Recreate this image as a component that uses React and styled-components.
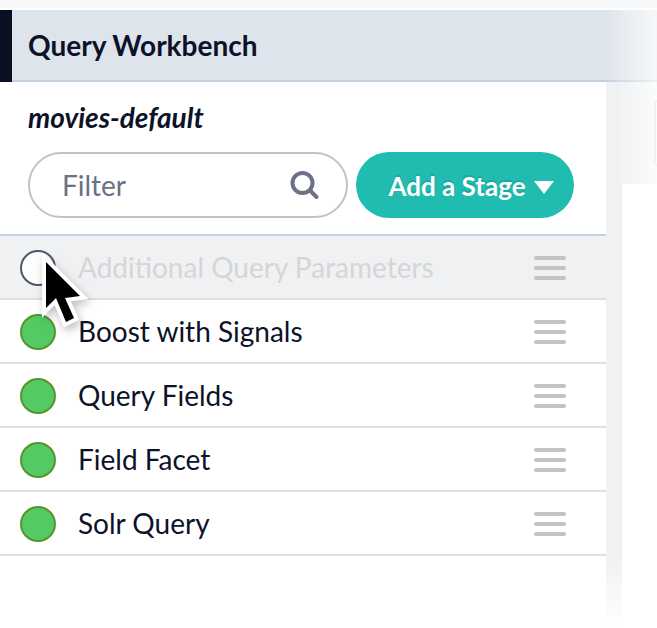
import React, { useState } from "react";
import styled, { createGlobalStyle } from "styled-components";

const GlobalStyle = createGlobalStyle`
  *, *::before, *::after { box-sizing: border-box; }
  body {
    margin: 0;
    background: #fff;
    color: #0c1228;
    font-family: Lato, "Open Sans", sans-serif;
    font-size: 28px;
    line-height: 36px;
  }
`;

const Page = styled.div`
  min-height: 100vh;
  display: flex;
  flex-direction: column;
  overflow: hidden;
`;

const TopStrip = styled.div`
  height: 10px;
  background: #f7f8fa;
  border-bottom: 2px solid #fff;
`;

const Header = styled.header`
  display: flex;
  height: 72px;
  background: linear-gradient(to left, #f6f7f8, #e9edf0 30px, #dee4ec 52px);
`;

const Accent = styled.div`
  width: 12px;
  background: #0a0f24;
`;

const Title = styled.h1`
  flex: 1;
  margin: 0;
  padding: 17px 16px;
  border-bottom: 2px solid;
  border-image: linear-gradient(to left, #eff2f5, #c5d0de 52px) 1;
  font-size: 28px;
  font-weight: 700;
  line-height: 36px;
`;

const Body = styled.div`
  flex: 1;
  display: flex;
`;

const Panel = styled.main`
  flex: 1;
  min-width: 0;
`;

const Gutter = styled.div`
  width: 16px;
  background: linear-gradient(to top, #fff, #eff1f3 70px);
`;

const Side = styled.aside`
  width: 35px;
`;

const SideTop = styled.div`
  display: flex;
  justify-content: flex-end;
  height: 102px;
  padding: 18px 0;
  background: linear-gradient(to right, #f1f3f5, #fbfcfc);
`;

const SideCard = styled.div`
  width: 3px;
  border: 2px solid #f1f2f3;
  border-right: 0;
  border-radius: 8px 0 0 8px;
`;

const Tools = styled.section`
  padding: 17px 32px 16px 28px;
  border-bottom: 2px solid #c5d0de;
`;

const AppName = styled.h2`
  margin: 0 0 17px;
  font-size: 28px;
  font-style: italic;
  font-weight: 700;
  line-height: 36px;
`;

const ToolRow = styled.div`
  display: flex;
  gap: 8px;
`;

const FilterBox = styled.label`
  flex: 1;
  min-width: 0;
  height: 66px;
  display: flex;
  align-items: center;
  padding: 0 26px 0 32px;
  border: 2px solid #c2c2c2;
  border-radius: 33px;
  background: #fff;
`;

const FilterInput = styled.input`
  flex: 1;
  min-width: 0;
  padding: 0;
  border: 0;
  outline: 0;
  background: none;
  color: #0c1228;
  font: inherit;
  &::placeholder { color: #6b7186; opacity: 1; }
`;

const AddButton = styled.button`
  width: 218px;
  height: 66px;
  display: flex;
  align-items: center;
  justify-content: center;
  gap: 8px;
  padding: 4px 0 0 12px;
  border: 0;
  border-radius: 33px;
  background: #20bcb0;
  color: #fff;
  font: inherit;
  font-size: 26px;
  font-weight: 700;
  text-shadow: 0 -2px 0 #1ba89d;
  white-space: nowrap;
`;

const Caption = styled.span`
  padding-bottom: 2px;
`;

const StageList = styled.ul`
  margin: 0;
  padding: 0;
  list-style: none;
`;

const StageRow = styled.li`
  height: 64px;
  display: flex;
  align-items: center;
  padding: 14px 40px 12px 20px;
  border-bottom: 2px solid #dedfe1;
  background: ${(p) => (p.$on ? "#fff" : "#eff1f3")};
  color: ${(p) => (p.$on ? "#0c1228" : "#d5d6d7")};
`;

const StageLabel = styled.label`
  flex: 1;
  display: flex;
  align-items: center;
  gap: 22px;
  white-space: nowrap;
`;

const StageToggle = styled.input`
  appearance: none;
  width: 36px;
  height: 36px;
  margin: 0;
  border: 2px solid #4f566b;
  border-radius: 50%;
  background: #fcfdfd;
  &:checked { border-color: #57962f; background: #53ca63; }
`;

const Handle = styled.button`
  width: 32px;
  height: 24px;
  padding: 0;
  display: flex;
  flex-direction: column;
  justify-content: space-between;
  border: 0;
  background: none;
`;

const HandleBar = styled.span`
  width: 100%;
  height: 4px;
  border-radius: 2px;
  background: #c3c3c3;
`;

const Pointer = styled.svg`
  position: absolute;
  left: 36px;
  top: 250px;
  pointer-events: none;
  filter: drop-shadow(2px 4px 4px rgba(0, 0, 0, 0.25));
`;

const initialStages = [
  { name: "Additional Query Parameters", on: false },
  { name: "Boost with Signals", on: true },
  { name: "Query Fields", on: true },
  { name: "Field Facet", on: true },
  { name: "Solr Query", on: true },
];

function SearchIcon() {
  return (
    <svg width="30" height="30" viewBox="0 0 30 30" fill="none" stroke="#6b7186" strokeLinecap="round" aria-hidden="true">
      <circle cx="12.5" cy="13" r="10" strokeWidth="4" />
      <path d="M20 20.5L26.5 27" strokeWidth="4" />
    </svg>
  );
}

function Stage({ stage, onToggle }) {
  return (
    <StageRow $on={stage.on}>
      <StageLabel>
        <StageToggle type="checkbox" checked={stage.on} onChange={onToggle} />
        <Caption>{stage.name}</Caption>
      </StageLabel>
      <Handle type="button" aria-label={`Reorder ${stage.name}`}>
        <HandleBar />
        <HandleBar />
        <HandleBar />
      </Handle>
    </StageRow>
  );
}

export default function App() {
  const [stages, setStages] = useState(initialStages);
  const toggle = (index) =>
    setStages(stages.map((s, i) => (i === index ? { ...s, on: !s.on } : s)));

  return (
    <Page>
      <GlobalStyle />
      <TopStrip />
      <Header>
        <Accent />
        <Title>Query Workbench</Title>
      </Header>
      <Body>
        <Panel>
          <Tools>
            <AppName>movies-default</AppName>
            <ToolRow>
              <FilterBox>
                <FilterInput type="text" placeholder="Filter" aria-label="Filter" />
                <SearchIcon />
              </FilterBox>
              <AddButton type="button">
                <Caption>Add a Stage</Caption>
                <svg width="20" height="14" viewBox="0 0 20 14" fill="#fff" aria-hidden="true">
                  <path d="M0 1H20L10 14Z" />
                </svg>
              </AddButton>
            </ToolRow>
          </Tools>
          <StageList>
            {stages.map((stage, i) => (
              <Stage key={stage.name} stage={stage} onToggle={() => toggle(i)} />
            ))}
          </StageList>
        </Panel>
        <Gutter />
        <Side>
          <SideTop>
            <SideCard />
          </SideTop>
        </Side>
      </Body>
      <Pointer width="60" height="84" viewBox="0 0 60 84" aria-hidden="true">
        <path
          d="M10 12V58L20 48L30 72L38 68L29 48L44 46Z"
          fill="#000"
          stroke="#fff"
          strokeWidth="8"
          strokeMiterlimit="6"
          paintOrder="stroke"
        />
      </Pointer>
    </Page>
  );
}
